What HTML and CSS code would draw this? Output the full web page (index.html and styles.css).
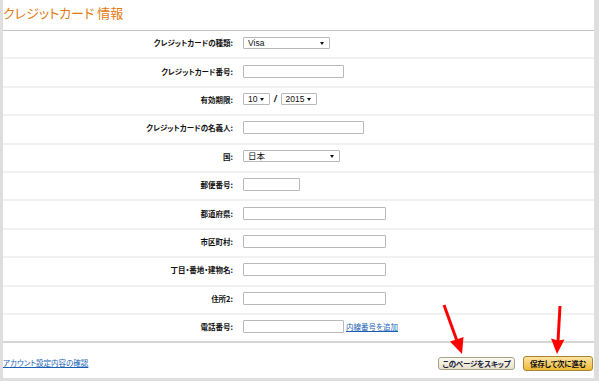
FILE: index.html
```html
<!DOCTYPE html>
<html lang="ja">
<head>
    <meta charset="UTF-8">
    <title>クレジットカード 情報</title>
    <link rel="stylesheet" href="styles.css">
</head>
<body>

    <div class="page">
        <div class="page-title">クレジットカード 情報</div>

        <div class="form">
            <div class="row">
                <div class="label">クレジットカードの種類:</div>
                <div class="field">
                    <span class="select w-card">Visa</span>
                </div>
            </div>
            <div class="row">
                <div class="label">クレジットカード番号:</div>
                <div class="field"><input class="text w-100" type="text"></div>
            </div>
            <div class="row">
                <div class="label">有効期限:</div>
                <div class="field">
                    <span class="select w-month">10</span>
                    <span class="slash">/</span>
                    <span class="select w-year">2015</span>
                </div>
            </div>
            <div class="row">
                <div class="label">クレジットカードの名義人:</div>
                <div class="field"><input class="text w-name" type="text"></div>
            </div>
            <div class="row">
                <div class="label">国:</div>
                <div class="field">
                    <span class="select w-country">日本</span>
                </div>
            </div>
            <div class="row">
                <div class="label">郵便番号:</div>
                <div class="field"><input class="text w-zip" type="text"></div>
            </div>
            <div class="row">
                <div class="label">都道府県:</div>
                <div class="field"><input class="text w-long" type="text"></div>
            </div>
            <div class="row">
                <div class="label">市区町村:</div>
                <div class="field"><input class="text w-long" type="text"></div>
            </div>
            <div class="row">
                <div class="label">丁目・番地・建物名:</div>
                <div class="field"><input class="text w-long" type="text"></div>
            </div>
            <div class="row">
                <div class="label">住所2:</div>
                <div class="field"><input class="text w-long" type="text"></div>
            </div>
            <div class="row last">
                <div class="label">電話番号:</div>
                <div class="field">
                    <input class="text w-100" type="text">
                    <a href="#" class="link">内線番号を追加</a>
                </div>
            </div>
        </div>

        <div class="footer">
            <a href="#" class="link account-link">アカウント設定内容の確認</a>
            <div class="buttons">
                <button class="btn btn-skip">このページをスキップ</button>
                <button class="btn btn-save">保存して次に進む</button>
            </div>
        </div>

        <!-- red arrows pointing at the buttons -->
        <svg class="arrows" width="591" height="378" viewBox="0 0 591 378">
            <line x1="441" y1="305" x2="454" y2="341" stroke="#f00" stroke-width="3"/>
            <polygon points="459,354 447,341.5 453.5,339.5 460.5,337" fill="#f00"/>
            <line x1="557" y1="306" x2="555" y2="341" stroke="#f00" stroke-width="3"/>
            <polygon points="554,354 548,338.5 555,340.5 561.5,339.5" fill="#f00"/>
        </svg>
    </div>

</body>
</html>
```

FILE: styles.css
```css
/* Credit card info form */
body {
    margin: 0;
    background-color: #dedede;
    font-family: "Liberation Sans", "Noto Sans CJK JP", sans-serif;
}

.page {
    position: relative;
    margin-left: 3px;
    width: 591px;
    height: 378px;
    background-color: #fff;
    overflow: hidden;
}

.page-title {
    height: 31px;
    box-sizing: border-box;
    padding-top: 4px;
    font-family: "Noto Sans CJK JP", sans-serif;
    font-feature-settings: "palt";
    font-size: 13px;
    line-height: 18px;
    color: #e47911; /* orange heading */
    border-bottom: 1px solid #c4c4c4;
}

.row {
    display: flex;
    align-items: center;
    box-sizing: border-box;
    height: 28.4px;
    padding-bottom: 3px;
    border-bottom: 2px solid #f1f1f1;
}

.row.last {
    border-bottom: 2px solid #d6d6d6;
}

.label {
    width: 230px;
    text-align: right;
    font-family: "Noto Sans CJK JP", sans-serif;
    font-feature-settings: "palt";
    font-weight: bold;
    font-size: 7.5px;
    color: #111;
}

.field {
    margin-left: 10px;
    display: flex;
    align-items: center;
}

.text {
    box-sizing: border-box;
    height: 13px;
    margin: 0;
    padding: 0;
    border: 1px solid #b9b9b9;
    border-radius: 1px;
    background-color: #fff;
}

.select {
    position: relative;
    box-sizing: border-box;
    height: 12px;
    padding-left: 4px;
    border: 1px solid #b9b9b9;
    border-radius: 1px;
    font-family: "Liberation Sans", "Noto Sans CJK JP", sans-serif;
    font-size: 8.5px;
    line-height: 10px;
    color: #111;
}

/* small dropdown triangle */
.select::after {
    content: "";
    position: absolute;
    right: 5px;
    top: 4px;
    border-left: 2.5px solid transparent;
    border-right: 2.5px solid transparent;
    border-top: 3px solid #111;
}

.w-card { width: 87px; }
.w-100 { width: 101px; }
.w-month { width: 27px; }
.w-year { width: 36px; }
.w-name { width: 121px; }
.w-country { width: 97px; }
.w-zip { width: 57px; }
.w-long { width: 143px; }

.slash {
    margin: 0 4px;
    font-size: 9px;
    font-weight: bold;
    font-style: italic;
}

.link {
    font-family: "Noto Sans CJK JP", sans-serif;
    font-feature-settings: "palt";
    font-size: 7.5px;
    color: #1a5fb4;
    text-decoration: underline;
    white-space: nowrap;
}

.field .link {
    margin-left: 2px;
}

.footer {
    display: flex;
    align-items: flex-end;
    justify-content: space-between;
    box-sizing: border-box;
    height: 31px;
    padding-bottom: 3px;
}

.account-link {
    margin-bottom: 3px;
}

.buttons {
    display: flex;
    align-items: flex-end;
    gap: 8px;
    margin-right: 1px;
}

.btn {
    margin: 0;
    padding: 0;
    font-family: "Noto Sans CJK JP", sans-serif;
    font-feature-settings: "palt";
    font-weight: bold;
    font-size: 7.5px;
    line-height: 11px;
    letter-spacing: -0.2px;
    white-space: nowrap;
    color: #111;
    border-radius: 3px;
    cursor: pointer;
}

.btn-skip {
    width: 77px;
    height: 13px;
    margin-bottom: 1px;
    border: 1px solid #a6a28c;
    background: linear-gradient(#fbfaf3, #e6e1c8);
    color: #1c2340;
}

.btn-save {
    width: 70px;
    height: 15px;
    border: 1px solid #a7862f;
    background: linear-gradient(#fbe3a3, #f0b935);
}

.arrows {
    position: absolute;
    left: 0;
    top: 0;
    pointer-events: none;
}
```
